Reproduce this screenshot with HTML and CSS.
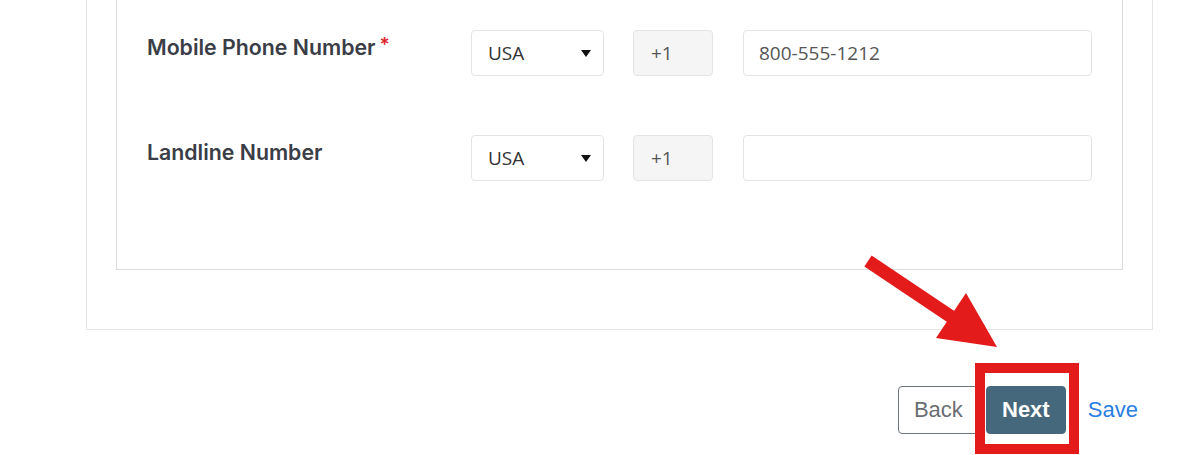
FILE: index.html
```html
<!DOCTYPE html>
<html>
<head>
<meta charset="utf-8">
<link rel="stylesheet" href="styles.css">
</head>
<body>
<div class="page">
  <section class="outer">
    <div class="inner">
      <div class="row">
        <div class="label">Mobile Phone Number<span class="req">*</span></div>
        <div class="select"><span>USA</span><span class="caret"></span></div>
        <div class="code">+1</div>
        <div class="input">800-555-1212</div>
      </div>
      <div class="row">
        <div class="label">Landline Number</div>
        <div class="select"><span>USA</span><span class="caret"></span></div>
        <div class="code">+1</div>
        <div class="input"></div>
      </div>
    </div>
  </section>
  <div class="actions">
    <button class="btn btn-back">Back</button>
    <button class="btn btn-next">Next</button>
    <a class="save">Save</a>
  </div>
  <div class="highlight"></div>
  <svg class="arrow" width="1200" height="455" viewBox="0 0 1200 455">
    <line x1="868" y1="261" x2="953" y2="318" stroke="#e31b1b" stroke-width="13"/>
    <polygon points="936,338 966,293 997,347" fill="#e31b1b"/>
  </svg>
</div>
</body>
</html>
```
FILE: styles.css
```css
html, body {
  margin: 0;
  padding: 0;
  background: #ffffff;
}
.page {
  position: relative;
  width: 1200px;
  height: 455px;
  overflow: hidden;
}
.outer {
  box-sizing: border-box;
  margin-left: 86px;
  width: 1067px;
  border: 1px solid #e6e6e6;
  border-top: 0;
  padding: 0 29px 59px 29px;
}
.inner {
  border: 1px solid #dcdcdc;
  border-top: 0;
  padding: 30px 30px 88px 30px;
  display: flex;
  flex-direction: column;
  gap: 59px;
}
.row {
  display: flex;
  align-items: flex-start;
  height: 46px;
}
.label {
  width: 324px;
  flex: none;
  font-family: Inter, "Noto Sans", sans-serif;
  font-weight: 600;
  font-size: 21.3px;
  line-height: 24px;
  color: #3a3d46;
  padding-top: 5px;
}
.req {
  color: #e0262b;
  font-size: 19px;
  margin-left: 4px;
  position: relative;
  top: -4px;
}
.select, .code, .input {
  box-sizing: border-box;
  height: 46px;
  border: 1px solid #e4e4e4;
  border-radius: 4px;
  display: flex;
  align-items: center;
  font-family: "Open Sans", sans-serif;
  font-size: 19px;
  color: #333;
}
.select {
  width: 133px;
  padding: 0 12px 0 16px;
  justify-content: space-between;
  background: #fff;
}
.caret {
  width: 0;
  height: 0;
  border-left: 5px solid transparent;
  border-right: 5px solid transparent;
  border-top: 7px solid #111;
}
.code {
  width: 80px;
  margin-left: 29px;
  padding-left: 17px;
  background: #f5f5f5;
  color: #555;
}
.input {
  width: 349px;
  margin-left: 30px;
  padding-left: 15px;
  background: #fff;
  color: #555;
}
.actions {
  display: flex;
  justify-content: flex-end;
  align-items: center;
  margin-top: 56px;
  padding-right: 62px;
}
.btn {
  height: 48px;
  padding: 0 15px;
  border-radius: 4px;
  font-family: "Liberation Sans", Arial, sans-serif;
  font-size: 22px;
}
.btn-back {
  background: #fff;
  border: 1px solid #6c757d;
  color: #6a6e73;
}
.btn-next {
  margin-left: 7px;
  width: 80px;
  background: #46687c;
  border: 1px solid #46687c;
  color: #fff;
  font-weight: 700;
}
.save {
  margin-left: 22px;
  font-family: "Liberation Sans", Arial, sans-serif;
  font-size: 22px;
  color: #2a7de1;
}
.highlight {
  position: absolute;
  left: 975px;
  top: 363px;
  width: 84px;
  height: 71px;
  border: 10px solid #e31b1b;
}
.arrow {
  position: absolute;
  left: 0;
  top: 0;
}
```
